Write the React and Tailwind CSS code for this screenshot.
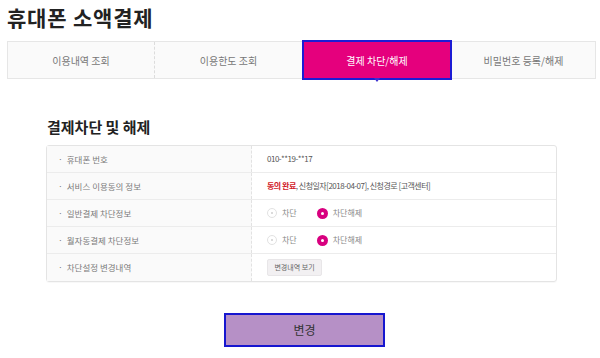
import React, { useState } from 'react';

const tabs = ['이용내역 조회', '이용한도 조회', '결제 차단/해제', '비밀번호 등록/해제'];

const Radio = ({ checked, label }) => (
  <span className="flex items-center gap-[5px]">
    {checked ? (
      <span className="flex h-[11px] w-[11px] items-center justify-center rounded-full bg-[#d8007f]">
        <span className="h-[3px] w-[3px] rounded-full bg-white" />
      </span>
    ) : (
      <span className="flex h-[10px] w-[10px] items-center justify-center rounded-full border border-[#e2e2e2] bg-white">
        <span className="h-[2px] w-[2px] rounded-full bg-[#cfcfcf]" />
      </span>
    )}
    <span className="text-[#888]">{label}</span>
  </span>
);

const Row = ({ label, children, last }) => (
  <div className={`flex h-[27px] ${last ? '' : 'border-b border-[#ececec]'}`}>
    <div className="flex w-[205px] items-center bg-[#fafafa] pl-[11px] text-[8.5px] text-[#7a7a7a] border-r border-dashed border-[#e2e2e2]">
      <span className="mr-[4px]">·</span>
      {label}
    </div>
    <div className="flex flex-1 items-center pl-[15px] text-[8px] tracking-[-0.5px] text-[#555]">{children}</div>
  </div>
);

export default function App() {
  const [active, setActive] = useState(2);
  const [general, setGeneral] = useState(false);

  return (
    <div className="h-[358px] w-[600px] overflow-hidden bg-white font-['Noto_Sans_CJK_KR',sans-serif]">
      <h1 className="pl-[7px] pt-[2px] text-[21px] font-bold leading-[30px] tracking-[0.8px] text-[#222]">
        휴대폰 소액결제
      </h1>

      {/* tabs */}
      <div className="relative ml-[7px] mt-[9px] flex h-[38px] w-[589px] border border-[#e6e6e6] bg-[#fafafa] text-[10px] text-[#777]">
        {tabs.map((t, i) => {
          const w = ['w-[147px]', 'w-[147px]', 'w-[150px]', 'flex-1'][i];
          if (i === active) {
            return (
              <button
                key={t}
                onClick={() => setActive(i)}
                className={`relative -my-[2px] ${w} h-[40px] border-2 border-[#1c1cd4] bg-[#e5007d] text-white`}
              >
                {t}
                <span className="absolute left-1/2 top-full -translate-x-1/2 border-x-[3px] border-t-[4px] border-x-transparent border-t-[#3b2fd0]" />
              </button>
            );
          }
          return (
            <button
              key={t}
              onClick={() => setActive(i)}
              className={`${w} h-full ${i === 0 ? 'border-r border-dashed border-[#dcdcdc]' : ''}`}
            >
              {t}
            </button>
          );
        })}
      </div>

      {/* content */}
      <div className="ml-[46px] w-[511px]">
        <h2 className="mt-[38px] pl-[1px] text-[15px] font-bold leading-[20px] text-[#222]">결제차단 및 해제</h2>

        <div className="mt-[8px] rounded-[3px] border border-[#e4e4e4] shadow-[0_1px_1px_rgba(0,0,0,0.03)]">
          <Row label="휴대폰 번호">010-**19-**17</Row>
          <Row label="서비스 이용동의 정보">
            <span className="font-bold text-[#d11a2a]">동의 완료</span>
            <span>, 신청일자[2018-04-07], 신청경로 [고객센터]</span>
          </Row>
          <Row label="일반결제 차단정보">
            <div className="flex items-center gap-[20px] tracking-normal" onClick={() => setGeneral(!general)}>
              <Radio checked={general} label="차단" />
              <Radio checked={!general} label="차단해제" />
            </div>
          </Row>
          <Row label="월자동결제 차단정보">
            <div className="flex items-center gap-[20px] tracking-normal">
              <Radio checked={false} label="차단" />
              <Radio checked label="차단해제" />
            </div>
          </Row>
          <Row label="차단설정 변경내역" last>
            <button className="h-[17px] w-[55px] rounded-[2px] border border-[#e8e6e8] bg-[#f2f0f2] text-[7px] tracking-normal text-[#666]">
              변경내역 보기
            </button>
          </Row>
        </div>
      </div>

      <div className="mt-[31px] flex pl-[224px]">
        <button className="h-[34px] w-[161px] border-2 border-[#1616cf] bg-[#b690c6] text-[12px] text-[#333]">
          변경
        </button>
      </div>
    </div>
  );
}
